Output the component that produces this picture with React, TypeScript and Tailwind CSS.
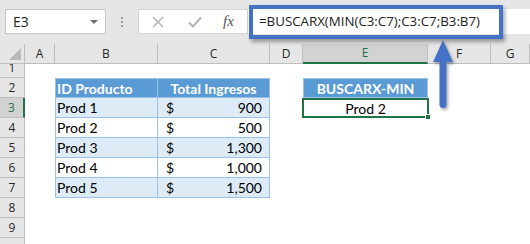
const cols = ["A", "B", "C", "D", "E", "F", "G"]

const data = [
  { id: "Prod 1", total: "900" },
  { id: "Prod 2", total: "500" },
  { id: "Prod 3", total: "1,300" },
  { id: "Prod 4", total: "1,000" },
  { id: "Prod 5", total: "1,500" },
]

const cellFont = "font-['Lato','Liberation_Sans',sans-serif] text-[14px] text-black"
const headFont = "font-['Open_Sans','Liberation_Sans',sans-serif] text-[12px] text-[#262626]"

function Cell({ row, col }: { row: number; col: string }) {
  // tabla B2:C7
  if (row === 2 && col === "B") {
    return (
      <div className={`${cellFont} flex items-center border-y border-x border-[#9bc2e6] bg-[#5b9bd5] pl-[1px] font-bold text-white`}>
        ID Producto
      </div>
    )
  }
  if (row === 2 && col === "C") {
    return (
      <div className={`${cellFont} flex items-center justify-center border-y border-r border-[#9bc2e6] bg-[#5b9bd5] font-bold text-white`}>
        Total Ingresos
      </div>
    )
  }
  if (row >= 3 && row <= 7 && (col === "B" || col === "C")) {
    const d = data[row - 3]
    const bg = row % 2 === 1 ? "bg-[#ddebf7]" : "bg-white"
    if (col === "B") {
      return (
        <div className={`${cellFont} ${bg} flex items-center border-x border-b border-[#9bc2e6] pl-[1px]`}>
          {d.id}
        </div>
      )
    }
    return (
      <div className={`${cellFont} ${bg} flex items-center justify-between border-r border-b border-[#9bc2e6] pl-[8px] pr-[7px]`}>
        <span>$</span>
        <span>{d.total}</span>
      </div>
    )
  }
  if (row === 2 && col === "E") {
    return (
      <div className={`${cellFont} flex items-center justify-center border border-[#9bc2e6] bg-[#5b9bd5] font-bold text-white`}>
        BUSCARX-MIN
      </div>
    )
  }
  if (row === 3 && col === "E") {
    return (
      <div className={`${cellFont} relative -mx-px flex items-center justify-center border-2 border-[#217346] bg-white`}>
        Prod 2
        <span className="absolute -right-[4px] -bottom-[4px] h-[6px] w-[6px] border border-white bg-[#217346]" />
      </div>
    )
  }
  return <div className="bg-white" />
}

export default function App() {
  const rows = [1, 2, 3, 4, 5, 6, 7, 8, 9, 10]
  return (
    <div className="relative h-[244px] w-[530px] overflow-hidden bg-white">
      {/* barra de fórmulas */}
      <div className="flex h-[44px] items-start bg-[#e6e6e6] pt-[9px] pl-[5px]">
        <div className="flex h-[25px] w-[101px] items-center justify-between border border-[#c6c6c6] bg-white pr-[7px] pl-[7px]">
          <span className="font-['Open_Sans','Liberation_Sans',sans-serif] text-[14px] text-[#222]">E3</span>
          <span className="h-0 w-0 border-x-[4px] border-t-[4px] border-x-transparent border-t-[#6f6f6f]" />
        </div>
        <div className="flex h-[25px] w-[32px] flex-col items-center justify-center gap-[2px]">
          <span className="h-[2px] w-[2px] bg-[#a0a0a0]" />
          <span className="h-[2px] w-[2px] bg-[#a0a0a0]" />
          <span className="h-[2px] w-[2px] bg-[#a0a0a0]" />
        </div>
        <div className="flex h-[25px] w-[110px] items-center border border-[#d4d4d4] bg-white">
          <svg width="12" height="12" viewBox="0 0 12 12" className="ml-[13px]">
            <path d="M1 1L11 11M11 1L1 11" stroke="#b4b4b4" strokeWidth="1.5" />
          </svg>
          <svg width="14" height="12" viewBox="0 0 14 12" className="ml-[24px]">
            <path d="M1 6.5L5 10.5L13 1.5" stroke="#b4b4b4" strokeWidth="2" fill="none" />
          </svg>
          <span className="ml-[21px] font-['Liberation_Serif',serif] text-[15px] italic text-[#555]">fx</span>
        </div>
        <div className="relative flex h-[25px] flex-1 items-center bg-white pl-[11px]">
          <span className="font-['Open_Sans','Liberation_Sans',sans-serif] text-[13.3px] text-[#222]">
            =BUSCARX(MIN(C3:C7);C3:C7;B3:B7)
          </span>
          <div className="absolute top-[-4px] left-[1px] h-[34px] w-[254px] border-4 border-[#4472c4] shadow-[2px_3px_4px_rgba(0,0,0,0.35)]" />
        </div>
      </div>

      {/* hoja */}
      <div className="grid grid-cols-[25px_30px_103px_112px_33px_125px_63px_1fr] grid-rows-[20px_14px_repeat(9,20px)]">
        <div className="relative border-r border-b border-[#bdbdbd] bg-[#e6e6e6]">
          <span className="absolute right-[3px] bottom-[3px] h-0 w-0 border-b-[12px] border-l-[12px] border-l-transparent border-b-[#b8b8b8]" />
        </div>
        {cols.map((c) =>
          c === "E" ? (
            <div key={c} className={`${headFont} flex items-center justify-center border-r border-b-2 border-r-[#bdbdbd] border-b-[#217346] bg-[#d2d2d2] !text-[#217346]`}>
              {c}
            </div>
          ) : (
            <div key={c} className={`${headFont} flex items-center justify-center border-r border-b border-[#bdbdbd] bg-[#e6e6e6]`}>
              {c}
            </div>
          )
        )}
        {rows.map((r) => (
          <div key={r} className="contents">
            {r === 3 ? (
              <div className={`${headFont} flex items-center justify-center border-r-2 border-b border-r-[#217346] border-b-[#bdbdbd] bg-[#d2d2d2] !text-[#217346]`}>
                {r}
              </div>
            ) : (
              <div className={`${headFont} flex ${r === 1 ? "items-end" : "items-center"} justify-center border-r border-b border-[#bdbdbd] bg-[#e6e6e6]`}>
                {r < 10 ? r : ""}
              </div>
            )}
            {cols.map((c) => (
              <Cell key={c} row={r} col={c} />
            ))}
          </div>
        ))}
      </div>

      {/* flecha */}
      <svg className="absolute top-[40px] left-[430px]" width="28" height="72" viewBox="0 0 28 72">
        <defs>
          <filter id="sh" x="-50%" y="-20%" width="200%" height="150%">
            <feDropShadow dx="1.5" dy="2" stdDeviation="1.5" floodOpacity="0.35" />
          </filter>
        </defs>
        <g filter="url(#sh)">
          <path d="M13 0L23 22L3 22Z" fill="#4472c4" />
          <rect x="9.5" y="20" width="7" height="48" rx="3.5" fill="#4472c4" />
        </g>
      </svg>
    </div>
  )
}
